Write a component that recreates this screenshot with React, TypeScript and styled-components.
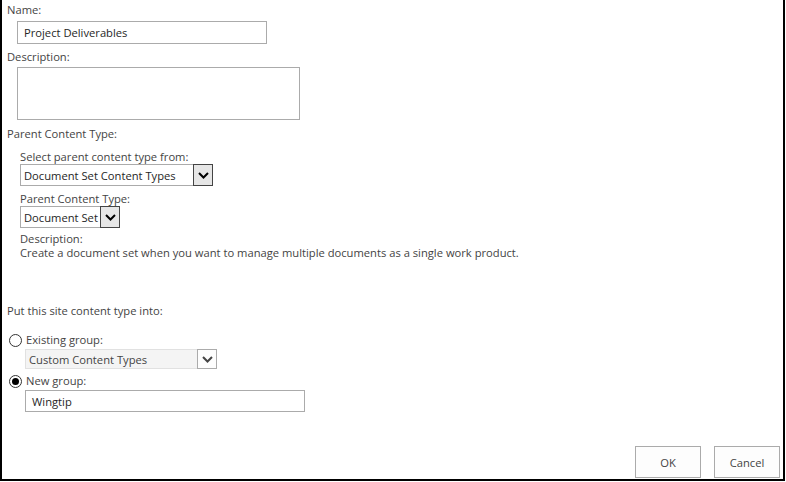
import React from "react";
import styled, { createGlobalStyle } from "styled-components";

const Global = createGlobalStyle`
  html, body { margin: 0; padding: 0; background: #fff; }
  body { font-family: "Open Sans", "Noto Sans", sans-serif; }
`;

const Frame = styled.div`
  box-sizing: border-box;
  width: 785px;
  height: 481px;
  border: 2px solid #000;
  border-top: none;
  padding: 2px 3px 1px 5px;
  display: flex;
  flex-direction: column;
  color: #444;
  font-size: 11.2px;
`;

const Label = styled.div<{ $indent?: number; $mt?: number }>`
  margin-left: ${(p) => p.$indent ?? 0}px;
  margin-top: ${(p) => p.$mt ?? 0}px;
  line-height: 16px;
  height: 16px;
  white-space: nowrap;
`;

const TextInput = styled.div<{ $w: number; $h: number; $indent: number; $mt?: number }>`
  box-sizing: border-box;
  width: ${(p) => p.$w}px;
  height: ${(p) => p.$h}px;
  margin-left: ${(p) => p.$indent}px;
  margin-top: ${(p) => p.$mt ?? 0}px;
  border: 1px solid #ababab;
  padding: 0 6px;
  display: flex;
  align-items: center;
  color: #262626;
  font-size: 11.2px;
`;

const TextArea = styled.div`
  box-sizing: border-box;
  width: 283px;
  height: 53px;
  margin-left: 10px;
  margin-top: 2px;
  border: 1px solid #ababab;
`;

const Select = styled.div<{ $w: number; $h: number; $indent: number; $disabled?: boolean; $mt?: number }>`
  box-sizing: border-box;
  width: ${(p) => p.$w}px;
  height: ${(p) => p.$h}px;
  margin-left: ${(p) => p.$indent}px;
  margin-top: ${(p) => p.$mt ?? 0}px;
  border: 1px solid ${(p) => (p.$disabled ? "#e1e1e1" : "#ababab")};
  background: ${(p) => (p.$disabled ? "#f4f4f4" : "#fff")};
  display: flex;
  align-items: center;
  color: ${(p) => (p.$disabled ? "#444" : "#262626")};
  font-size: 11.2px;
`;

const SelectText = styled.span`
  flex: 1;
  padding-left: 3px;
  white-space: nowrap;
  overflow: hidden;
`;

const Arrow = styled.span<{ $disabled?: boolean }>`
  box-sizing: border-box;
  width: 20px;
  height: calc(100% + 2px);
  margin: -1px -1px -1px 0;
  border: 1px solid ${(p) => (p.$disabled ? "#ababab" : "#444")};
  background: ${(p) => (p.$disabled ? "#fdfdfd" : "#e6e6e6")};
  display: flex;
  align-items: center;
  justify-content: center;
`;

const Chevron = ({ color }: { color: string }) => (
  <svg width="11" height="7" viewBox="0 0 11 7">
    <path d="M1 1 L5.5 5.5 L10 1" fill="none" stroke={color} strokeWidth="2" />
  </svg>
);

const RadioRow = styled.div<{ $mt?: number }>`
  display: flex;
  align-items: center;
  gap: 4px;
  margin-left: 2px;
  margin-top: ${(p) => p.$mt ?? 0}px;
  height: 16px;
  line-height: 16px;
`;

const RadioCircle = styled.span<{ $checked?: boolean }>`
  box-sizing: border-box;
  width: 13px;
  height: 13px;
  border-radius: 50%;
  border: 1px solid #333;
  display: flex;
  align-items: center;
  justify-content: center;
  &::after {
    content: "";
    display: ${(p) => (p.$checked ? "block" : "none")};
    width: 7px;
    height: 7px;
    border-radius: 50%;
    background: #000;
  }
`;

const Spacer = styled.div`
  flex: 1;
`;

const Buttons = styled.div`
  display: flex;
  justify-content: flex-end;
  gap: 13px;
`;

const Button = styled.button`
  box-sizing: border-box;
  width: 66px;
  height: 32px;
  border: 1px solid #ababab;
  background: #fdfdfd;
  color: #444;
  font-family: "Open Sans", "Noto Sans", sans-serif;
  font-size: 11.2px;
  padding: 0;
`;

export default function App() {
  return (
    <>
      <Global />
      <Frame>
        <Label>Name:</Label>
        <TextInput $w={250} $h={23} $indent={10} $mt={3}>Project Deliverables</TextInput>
        <Label $mt={5}>Description:</Label>
        <TextArea />
        <Label $mt={6}>Parent Content Type:</Label>
        <Label $indent={13} $mt={7}>Select parent content type from:</Label>
        <Select $w={193} $h={22} $indent={13} $mt={-1}>
          <SelectText>Document Set Content Types</SelectText>
          <Arrow><Chevron color="#000" /></Arrow>
        </Select>
        <Label $indent={13} $mt={5}>Parent Content Type:</Label>
        <Select $w={100} $h={22} $indent={13} $mt={-1}>
          <SelectText>Document Set</SelectText>
          <Arrow><Chevron color="#000" /></Arrow>
        </Select>
        <Label $indent={13} $mt={3}>Description:</Label>
        <Label $indent={13} $mt={-2}>
          Create a document set when you want to manage multiple documents as a single work product.
        </Label>
        <Label $mt={42}>Put this site content type into:</Label>
        <RadioRow $mt={13}>
          <RadioCircle />
          <span>Existing group:</span>
        </RadioRow>
        <Select $w={192} $h={20} $indent={18} $disabled $mt={1}>
          <SelectText>Custom Content Types</SelectText>
          <Arrow $disabled><Chevron color="#444" /></Arrow>
        </Select>
        <RadioRow $mt={4}>
          <RadioCircle $checked />
          <span>New group:</span>
        </RadioRow>
        <TextInput $w={280} $h={22} $indent={18} $mt={1}>Wingtip</TextInput>
        <Spacer />
        <Buttons>
          <Button>OK</Button>
          <Button>Cancel</Button>
        </Buttons>
      </Frame>
    </>
  );
}
